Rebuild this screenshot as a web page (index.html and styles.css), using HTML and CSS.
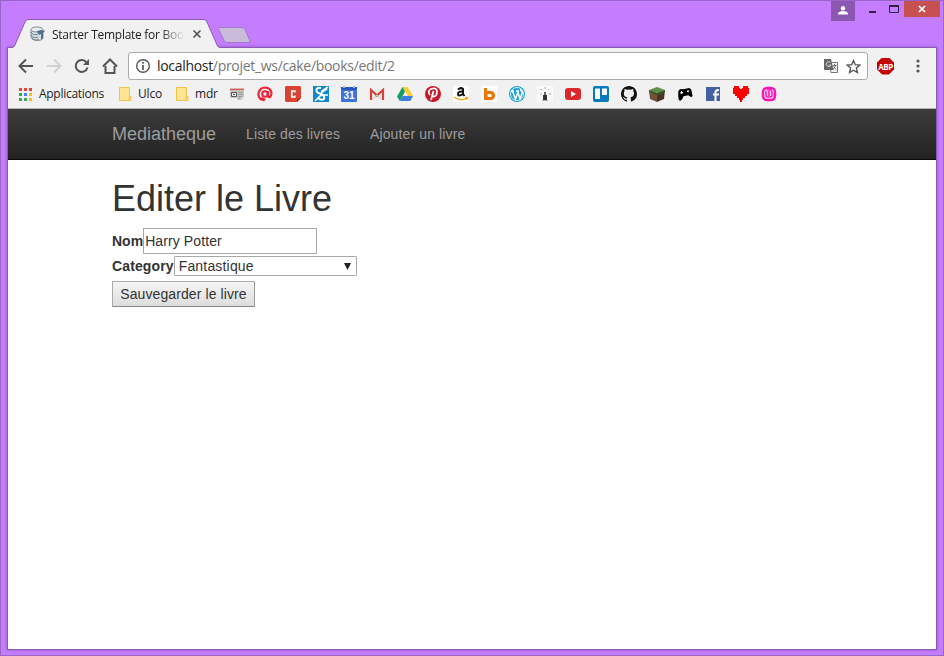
FILE: index.html
```
<!DOCTYPE html>
<html lang="fr">
<head>
<meta charset="utf-8">
<title>Starter Template for Bootstrap</title>
<link rel="stylesheet" href="styles.css">
</head>
<body>
<div class="window">
  <header class="titlebar">
    <div class="tab">
      <svg class="tab-shape" width="206" height="30" viewBox="0 0 206 30"><path d="M0 28.500L1.500 27L12 3Q13 .5 15 .5H191Q193 .5 194 3L204.500 27L206 28.500V30H0Z" fill="#f1f1f1"/><path d="M0 28.500L1.500 27L12 3Q13 .5 15 .5H191Q193 .5 194 3L204.500 27L206 28.500" fill="none" stroke="#8b59b4"/></svg>
      <svg class="favicon" width="16" height="16" viewBox="0 0 16 16"><path d="M1 4V11C1 15 12 16 13 12V4" fill="#d8dde1" stroke="#87929b"/><ellipse cx="7" cy="3.500" rx="6" ry="2.500" fill="#eee" stroke="#7b8994"/><path d="M1 6C2 9 6 9 8 8M1 9C2 12 6 12 8 11M2 12C4 15 8 14 9 13" fill="none" stroke="#68798a"/><path d="M7 5l4-1 4 1-2 2v5l-2 2V8L9 9Z" fill="#526f8c"/></svg>
      <span class="tab-title">Starter Template for Boot</span>
      <svg class="tab-close" width="10" height="10" viewBox="0 0 10 10"><path d="M1.500 1.500l7 7M8.500 1.500l-7 7" stroke="#555" stroke-width="1.700"/></svg>
    </div>
    <svg class="new-tab" width="35" height="18" viewBox="0 0 35 18"><path d="M3 1.500H25Q27 1.500 28 3.500L33 15Q33.500 16.500 32 16.500H10Q8 16.500 7 14.500L1.500 3Q1 1.500 3 1.500Z" fill="#cbbbdb" stroke="#a477ca"/></svg>
    <div class="controls">
      <div class="profile"><svg width="10" height="9" viewBox="0 0 10 9"><circle cx="5" cy="2.200" r="2.200" fill="#fff"/><path d="M0 8.500V7Q1.500 5 5 5T10 7V8.500Z" fill="#fff"/></svg></div>
      <svg class="minimize" width="7" height="2"><path d="M0 0H7V2H0Z" fill="#34203f"/></svg>
      <svg class="maximize" width="10" height="8"><path d="M.5 1H9.500V7.500H.5Z" fill="none" stroke="#34203f"/><path d="M0 1H10" stroke="#34203f" stroke-width="2"/></svg>
      <div class="close"><svg width="8" height="8" viewBox="0 0 8 8"><path d="M1 1l6 6M7 1L1 7" stroke="#fff" stroke-width="1.700"/></svg></div>
    </div>
  </header>
  <div class="browser">
    <div class="toolbar">
      <svg class="nav-icons" width="102" height="18" viewBox="0 0 102 18"><g fill="none" stroke="#555" stroke-width="2"><path d="M15 9H2M8 2.500L1.500 9 8 15.500"/><path d="M29 9H42M36 2.500L42.500 9 36 15.500" stroke="#d0d0d0"/><path d="M68.500 5.300A6 6 0 1 0 69.500 10.500"/><path d="M87.500 9V16H96.500V9"/><path d="M85 9.500L92 2.500 99 9.500"/></g><path d="M71 2V8H65Z" fill="#555"/></svg>
      <div class="address">
        <svg width="16" height="16" viewBox="0 0 16 16"><circle cx="8" cy="8" r="6.300" fill="none" stroke="#555" stroke-width="1.400"/><path d="M8 7V12M8 4V5.700" stroke="#555" stroke-width="1.700"/></svg>
        <span class="url"><b>localhost</b>/projet_ws/cake/books/edit/2</span>
        <svg class="translate" width="14" height="14" viewBox="0 0 14 14"><path d="M5.500 3.500H13.500V13.500H7Z" fill="#f5f5f5" stroke="#777"/><path d="M0 0H7L9.500 11H1Q0 11 0 10Z" fill="#666"/><path d="M6.500 3.500A2.400 2.400 0 1 0 7 6H4.800" fill="none" stroke="#ddd"/><path d="M8.500 6.500H12.500M10.500 5V6.500M11.500 7L9 10.500M9.500 7.500L12 10.500" fill="none" stroke="#777"/></svg>
        <svg class="star" width="15" height="15" viewBox="0 0 15 15"><path d="M7.500 1.500L9.300 5.700 13.800 6.100 10.400 9.100 11.400 13.500 7.500 11.200 3.600 13.500 4.600 9.100 1.200 6.100 5.700 5.700Z" fill="none" stroke="#555" stroke-width="1.400"/></svg>
      </div>
      <div class="abp">ABP</div>
      <svg class="menu" width="4" height="14" viewBox="0 0 4 14"><g fill="#555"><circle cx="2" cy="2" r="1.600"/><circle cx="2" cy="7" r="1.600"/><circle cx="2" cy="12" r="1.600"/></g></svg>
    </div>
    <div class="bookmarks">
      <svg class="apps" width="13" height="13"><path d="M0 0H3V3H0ZM5 0H8V3H5ZM10 0H13V3H10Z" fill="#ea4335"/><path d="M0 5H3V8H0ZM0 10H3V13H0ZM5 10H8V13H5Z" fill="#34a853"/><path d="M5 5H8V8H5Z" fill="#4285f4"/><path d="M10 5H13V8H10ZM10 10H13V13H10Z" fill="#fbbc05"/></svg>
      <span class="apps-label">Applications</span>
      <svg class="folder" width="13" height="15"><path d="M.5 .5H10.500V9.500H12V13.500H.5Z" fill="#ffe591" stroke="#e9c44e"/><path d="M10.500 9.500L9.500 13.500" stroke="#e9c44e"/></svg>
      <span class="ulco">Ulco</span>
      <svg class="folder" width="13" height="15"><path d="M.5 .5H10.500V9.500H12V13.500H.5Z" fill="#ffe591" stroke="#e9c44e"/><path d="M10.500 9.500L9.500 13.500" stroke="#e9c44e"/></svg>
      <span class="mdr">mdr</span>
      <div class="sites">
        <svg viewBox="0 0 16 16"><path d="M1 2H15V11L12 14H9L8 12H1Z" fill="#c8c8c8"/><path d="M1 3.500H15" stroke="#e55a4d" stroke-width="1.300"/><path d="M2.500 6.500H7.500V10.500H2.500Z" fill="#eee" stroke="#555"/><path d="M4 8.500H6" stroke="#555"/><path d="M9 6.500H14M9 8.500H14M9 10.500H13M9 12.500H11" stroke="#999"/></svg>
        <svg viewBox="0 0 16 16"><path d="M5 14Q1 12 1.500 7Q3 1.500 8 1.500Q14 2 14.500 7Q14 12 11.500 11Q10.500 10 11 5" fill="none" stroke="#ec2339" stroke-width="2.200"/><circle cx="8" cy="8" r="2.800" fill="none" stroke="#ec2339" stroke-width="2"/><path d="M4 11L9 13 7 15.500 4 14Z" fill="#ec2339"/></svg>
        <svg viewBox="0 0 16 16"><path d="M1 0H15L16 1V12L12 16H1L0 15V1Z" fill="#d84332"/><path d="M12 16V13L16 12Z" fill="#a92b20"/><path d="M9.800 6.500V5H6.800V11H9.800V9.500" fill="none" stroke="#fff" stroke-width="1.700"/></svg>
        <svg viewBox="0 0 16 16"><path d="M0 0H16V16H0Z" fill="#0c88d2"/><path d="M8 2Q3 1 3.500 5Q4 7 8 8T11 13Q8 15 5 12" fill="none" stroke="#fff" stroke-width="2"/><path d="M15 1L9 5 8 9 2 15M9 6L14 3M8 9L15 9" fill="none" stroke="#fff" stroke-width="1.700"/></svg>
        <svg viewBox="0 0 16 16"><rect y="1" width="16" height="15" rx="1" fill="#3f72df"/><path d="M0 1H16V4H0Z" fill="#2a58bb"/><path d="M2 0H4V2H2ZM12 0H14V2H12Z" fill="#a9bbdd"/><text x="8" y="13" class="calendar-text">31</text></svg>
        <svg viewBox="0 0 16 16"><path d="M1 3H15V14H1Z" fill="#eee"/><path d="M2 14V4L8 9.500 14 4V14" fill="none" stroke="#d54236" stroke-width="2.200"/><path d="M4 13L8 9 12 13" fill="none" stroke="#ccc"/></svg>
        <svg viewBox="0 0 16 16"><path d="M5.500 1H10.500L16 10H11Z" fill="#fdce32"/><path d="M5.500 1L8 5.500 2.800 15 0 10.500Z" fill="#179d62"/><path d="M5.500 10H16L13.300 15H2.800Z" fill="#3d7fe0"/></svg>
        <svg viewBox="0 0 16 16"><circle cx="8" cy="8" r="8" fill="#c9182a"/><path d="M5 9Q2 5 6 3Q11 1 12 5Q12 10 9 10.500Q7.500 10.500 7 9M8.500 5L6 14" fill="none" stroke="#fff" stroke-width="1.800"/></svg>
        <svg viewBox="0 0 16 16"><rect width="16" height="16" rx="2" fill="#fff"/><path d="M5 3.500Q8 1 10 3V8L11.500 10M10 5.500Q5 5 5 8T10 8" fill="none" stroke="#111" stroke-width="2"/><path d="M1 11Q8 16 14 12M12 11.500H14.500L13.500 14" fill="none" stroke="#f6a623" stroke-width="1.400"/></svg>
        <svg viewBox="0 0 16 16"><path d="M0 0H16V16H0Z" fill="#fff"/><path d="M3 2H6V5H11Q14 6 14 9.500T11 14H3Z" fill="#f07800"/><rect x="6.500" y="8" width="4" height="3" rx="1" fill="#fff"/></svg>
        <svg viewBox="0 0 16 16"><circle cx="8" cy="8" r="8" fill="#1ba2d4"/><circle cx="8" cy="8" r="6.500" fill="none" stroke="#fff" stroke-width=".8"/><path d="M2 5H5M3.500 5L6.500 13 9 6M7 5H10M8.500 5L11 13 13.500 6Q11 4 12 3" fill="none" stroke="#fff" stroke-width="1.500"/></svg>
        <svg viewBox="0 0 16 16"><path d="M0 0H16V16H0Z" fill="#fafafa"/><path d="M6 9H10V14H6Z" fill="#333"/><path d="M8 6V9" stroke="#666" stroke-width="2"/><path d="M3 3L5 4M3 8H5M8 1V3M12 3L11 4M12 8H14M5 14.500H11" stroke="#aaa"/></svg>
        <svg viewBox="0 0 16 16"><rect y="2" width="16" height="12" rx="3" fill="#dc272b"/><path d="M6 5L11 8 6 11Z" fill="#fff"/></svg>
        <svg viewBox="0 0 16 16"><rect width="16" height="16" rx="2" fill="#0779bf"/><path d="M2 2.500H7V13H2ZM9 2.500H14V9H9Z" fill="#fff"/></svg>
        <svg viewBox="0 0 16 16"><path fill="#111" d="M8 0C3.600 0 0 3.600 0 8c0 3.500 2.300 6.500 5.500 7.600.4.100.5-.2.500-.4v-1.500c-2 .4-2.700-.5-2.900-1-.1-.3-.5-1-.9-1.200-.3-.2-.6-.6 0-.6.700 0 1.100.6 1.300.8.700 1.200 1.900.9 2.400.7.100-.5.300-.9.500-1.100-1.800-.2-3.600-.9-3.600-4 0-.9.300-1.600.8-2.200-.1-.2-.4-1 .1-2.100 0 0 .7-.2 2.200.8a7.600 7.600 0 014 0c1.500-1 2.200-.8 2.200-.8.500 1.100.2 1.900.1 2.100.5.600.8 1.300.8 2.200 0 3.100-1.900 3.800-3.700 4 .3.300.6.800.6 1.500v2.200c0 .2.100.5.500.4A8 8 0 0016 8c0-4.400-3.600-8-8-8Z"/></svg>
        <svg viewBox="0 0 16 16"><path d="M0 4L8 7V16L1 13Z" fill="#70513a"/><path d="M16 4L8 7V16L15 13Z" fill="#4b3326"/><path d="M0 4L8 1 16 4 8 7Z" fill="#648f4a"/><path d="M0 4L8 7 16 4V6L13 7V8L8 9 4 8V7L0 6Z" fill="#375a29"/></svg>
        <svg viewBox="0 0 16 16"><g transform="rotate(-12 8 8)"><path d="M2 4Q4 1 7 3L11 3Q14 2 15 5L15 11Q14 14 11 10L6 10Q3 15 1 13Q0 12 2 4Z" fill="#000"/><path d="M3.500 6H6.500M5 4.500V7.500" stroke="#fff"/><circle cx="11.500" cy="6" r="1" fill="#fff"/></g></svg>
        <svg viewBox="0 0 16 16"><path d="M1 1H15V15H1Z" fill="#4460a0"/><path d="M10.500 15V6Q10.500 4 14 4M8 8.500H14" fill="none" stroke="#fff" stroke-width="2"/></svg>
        <svg viewBox="0 0 16 16" shape-rendering="crispEdges"><path d="M1 0H6V2H7V3H9V2H10V0H15V2H16V8H14V10H12V12H10V14H9V16H7V14H6V12H4V10H2V8H0V2H1Z" fill="red"/></svg>
        <svg viewBox="0 0 16 16"><rect x="2" y="2" width="12" height="12" rx="4" fill="#f8e4f3" stroke="#ff12b4" stroke-width="2.500"/><path d="M5 5V9Q5 11 7 11H9Q11 11 11 9V5M8 5V10M6 4H11" fill="none" stroke="#ff12b4" stroke-width="1.600"/></svg>
      </div>
    </div>
    <nav class="navbar">
      <a class="brand">Mediatheque</a>
      <a class="list-link">Liste des livres</a>
      <a class="add-link">Ajouter un livre</a>
    </nav>
    <main>
      <h1>Editer le Livre</h1>
      <form>
        <div class="name-row"><label for="name">Nom</label><input id="name" value="Harry Potter"></div>
        <div class="category-row"><label>Category</label><div class="select"><span>Fantastique</span><svg width="7" height="7"><path d="M0 0H7L3.500 7Z" fill="#222"/></svg></div></div>
        <button type="button">Sauvegarder le livre</button>
      </form>
    </main>
  </div>
</div>
</body>
</html>
```
FILE: styles.css
```
* { box-sizing: border-box; }
body { margin: 0; overflow: hidden; font-family: "Liberation Sans", sans-serif; color: #333; }
svg { display: block; flex: none; }
.window { width: 944px; height: 656px; border: 1px solid #9a64c7; background: #c47dff; padding: 0 6px 5px; display: flex; flex-direction: column; }
.titlebar { height: 46px; display: flex; flex: none; align-items: flex-start; }
.tab { position: relative; width: 206px; height: 30px; margin: 18px 0 0 6px; display: flex; align-items: center; font: 12px "Open Sans", sans-serif; color: #222; z-index: 2; }
.tab-shape { position: absolute; left: 0; top: 0; }
.favicon { position: relative; margin-left: 17px; }
.tab-title { position: relative; width: 134px; margin-left: 6px; white-space: nowrap; letter-spacing: -.28px; mask-image: linear-gradient(90deg, #000 108px, transparent 133px); }
.tab-close { position: relative; margin-left: 6px; }
.new-tab { margin: 25px 0 0 -2px; }
.controls { display: flex; margin-left: auto; margin-right: -3px; }
.profile { width: 24px; height: 20px; background: #8b57b0; display: flex; justify-content: center; padding-top: 5px; }
.minimize { margin: 10px 0 0 14px; }
.maximize { margin: 4px 0 0 13px; }
.close { margin-left: 5px; width: 36px; height: 16px; background: #c75050; display: flex; align-items: center; justify-content: center; }
.browser { flex: 1; border: 1px solid #8b5bb4; background: #fff; box-shadow: 0 0 3px #9156c1; display: flex; flex-direction: column; min-height: 0; }
.toolbar { height: 36px; flex: none; background: #f1f1f1; display: flex; align-items: center; padding-left: 10px; }
.address { width: 740px; height: 28px; margin-left: 8px; border: 1px solid #aaa; border-radius: 3px; background: #fff; display: flex; align-items: center; padding: 0 6px 0 6px; }
.url { font: 14px "Open Sans", sans-serif; margin: -2px 0 0 6px; color: #777; letter-spacing: -.31px; }
.url b { color: #222; font-weight: 400; }
.translate { margin-left: auto; }
.star { margin-left: 8px; }
.abp { width: 17px; height: 17px; margin-left: 9px; background: #c50000; color: #fff; font: bold 8px/17px "Open Sans", sans-serif; letter-spacing: -.5px; text-align: center; clip-path: polygon(30% 0, 70% 0, 100% 30%, 100% 70%, 70% 100%, 30% 100%, 0 70%, 0 30%); }
.menu { margin-left: 22px; }
.bookmarks { height: 25px; flex: none; border-bottom: 1px solid #b4b4b4; background: #f1f1f1; display: flex; align-items: center; padding: 0 0 4px 11px; font: 12px "Open Sans", sans-serif; color: #222; }
.bookmarks > span { margin-top: -1px; }
.apps-label { width: 65px; margin-left: 7px; letter-spacing: -.28px; }
.folder { margin-left: 15px; }
.ulco { width: 24px; margin-left: 6px; letter-spacing: -.15px; }
.folder + .mdr { width: 22px; margin-left: 6px; letter-spacing: -.2px; }
.ulco + .folder { margin-left: 14px; }
.sites { display: flex; gap: 12px; margin-left: 12px; }
.sites svg { width: 16px; height: 16px; }
.calendar-text { font: bold 10px "Liberation Sans", sans-serif; fill: #fff; text-anchor: middle; }
.navbar { height: 51px; flex: none; border-bottom: 1px solid #080808; background: linear-gradient(#3c3c3c, #222); padding-left: 104px; display: flex; align-items: center; gap: 30px; color: #9d9d9d; font-size: 14px; }
.brand { font-size: 18px; }
.list-link { letter-spacing: .08px; }
.add-link { letter-spacing: .13px; }
main { padding: 19px 104px 0; font-size: 14px; }
h1 { margin: 0; font-size: 36px; line-height: 40px; font-weight: 500; }
form { margin-top: 9px; }
.name-row, .category-row { display: flex; align-items: center; }
label { font-weight: bold; }
input { width: 174px; height: 26px; border: 1px solid #a9a9a9; padding: 1px; color: #333; font: 14px "Liberation Sans", sans-serif; letter-spacing: .1px; outline: none; }
.category-row { margin-top: 2px; }
.category-row label { letter-spacing: .12px; }
.select { width: 183px; height: 20px; border: 1px solid #a9a9a9; border-radius: 1px; padding: 0 5px 0 4px; display: flex; align-items: center; justify-content: space-between; letter-spacing: .18px; }
button { display: block; width: 143px; height: 26px; margin: 5px 0 0; padding: 0; border: 1px solid; border-color: #aaa #999 #888 #aaa; border-radius: 1px; background: linear-gradient(#f5f5f5, #ddd); color: #333; font: 14px "Liberation Sans", sans-serif; letter-spacing: .1px; }
```
